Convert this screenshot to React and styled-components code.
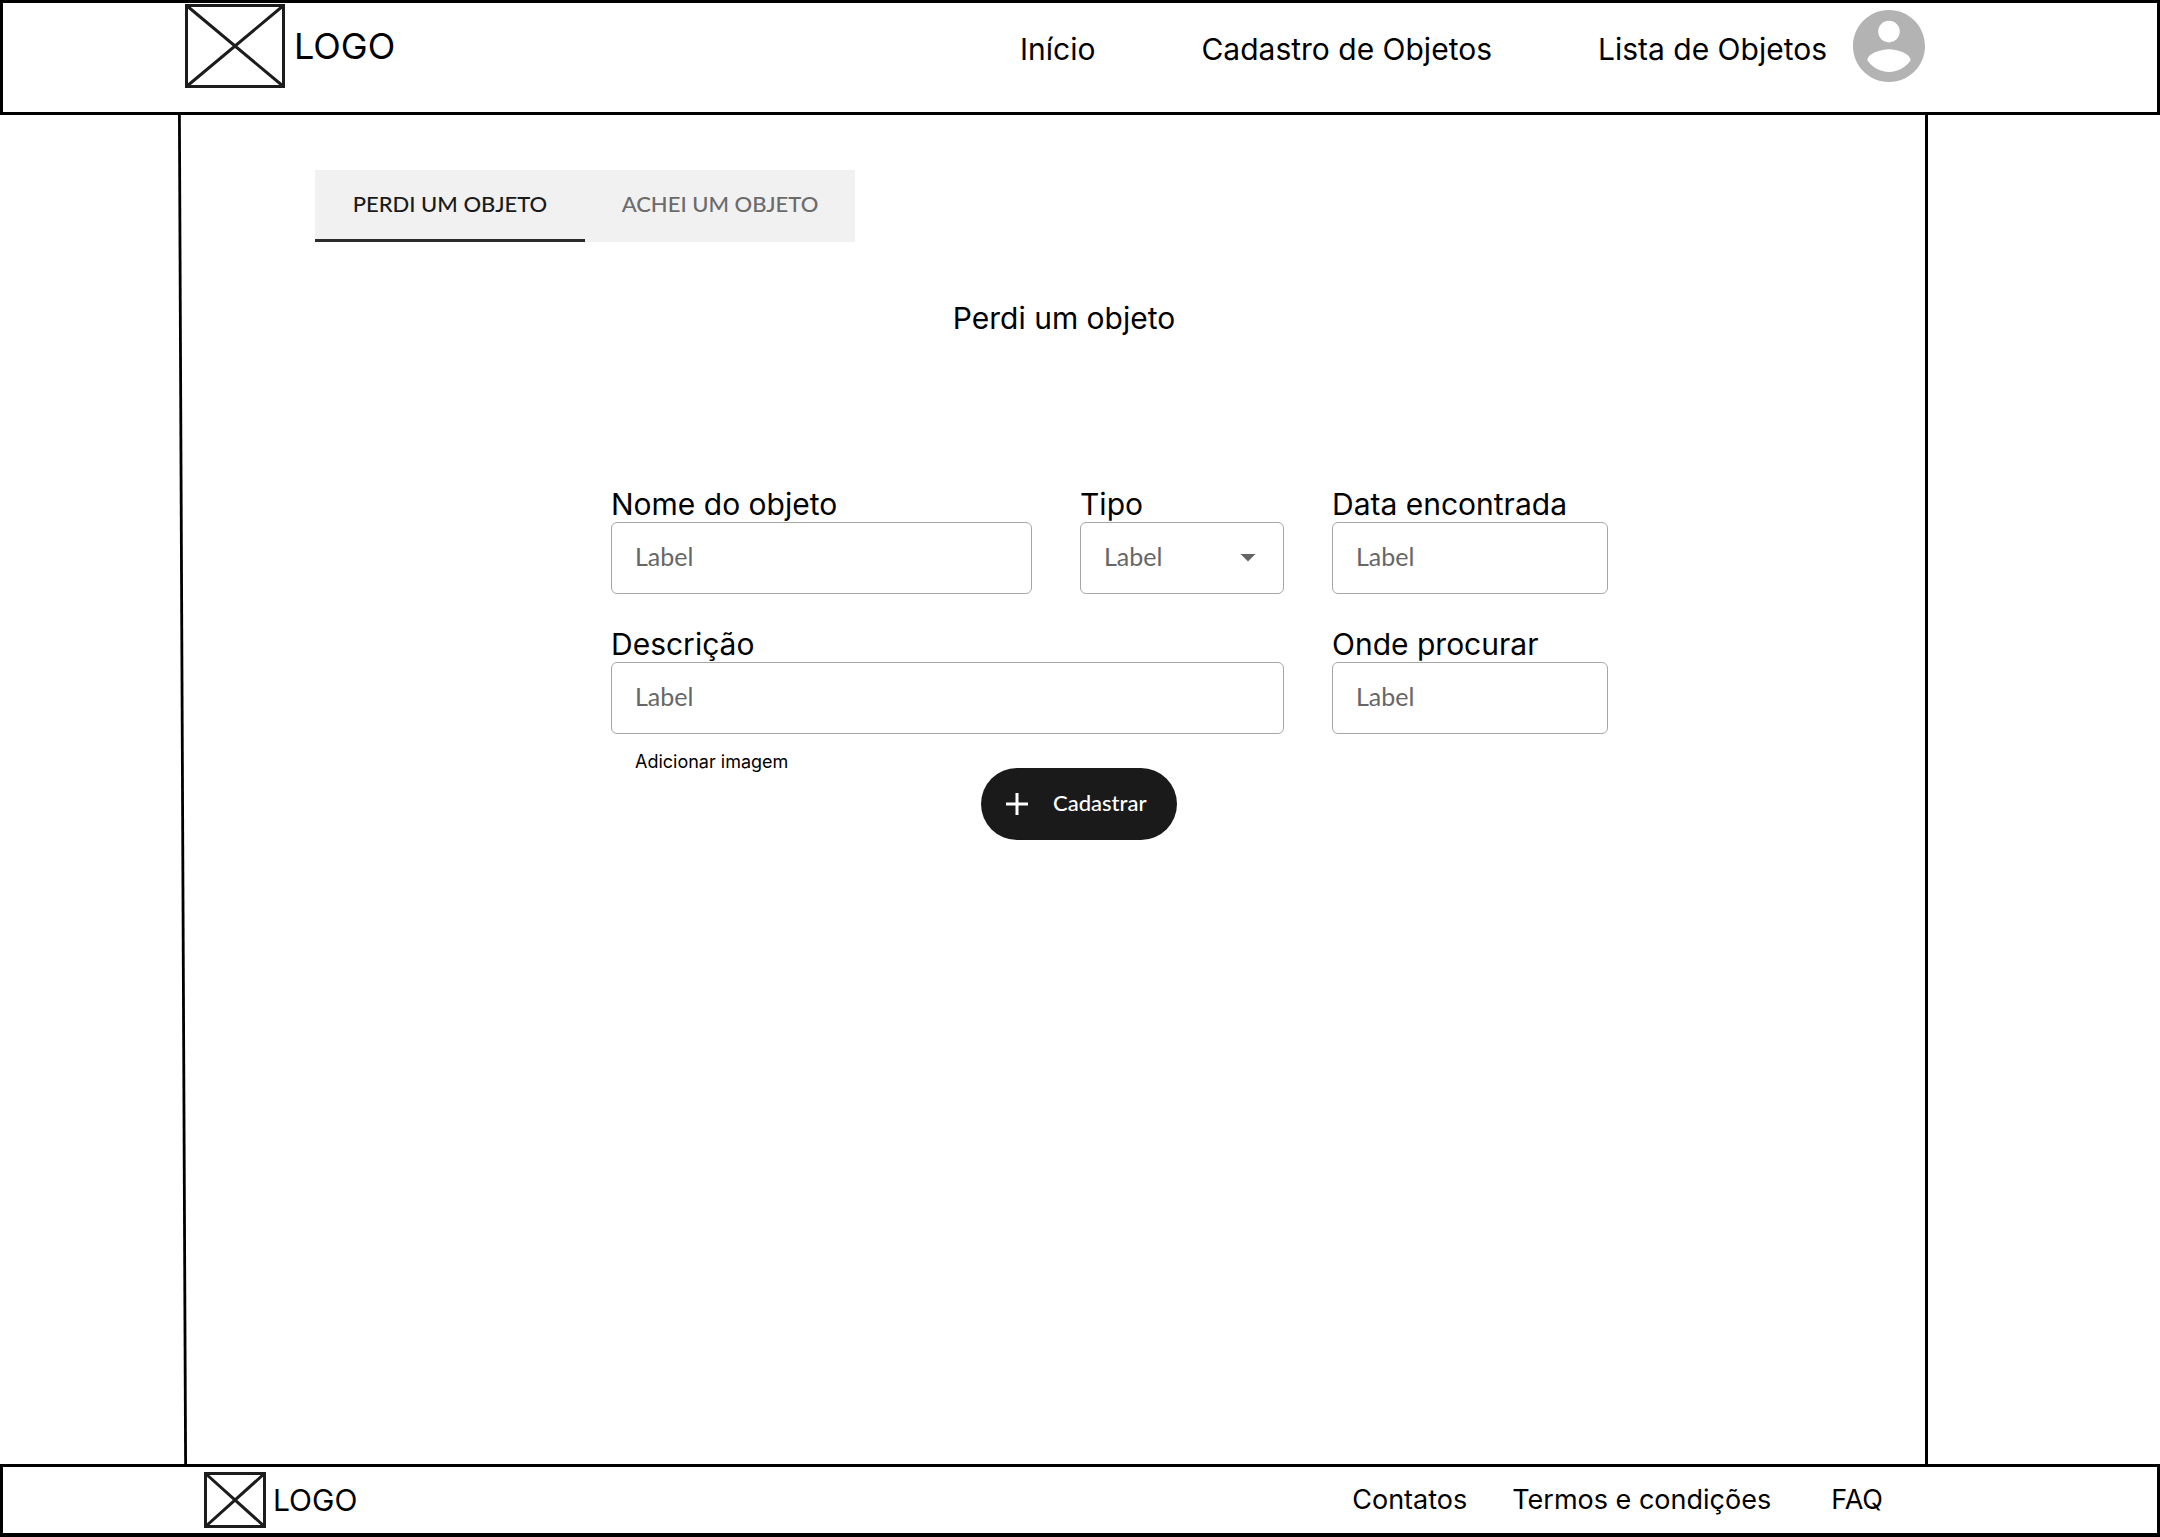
import React, { useState } from "react";
import styled, { createGlobalStyle } from "styled-components";

const GlobalStyle = createGlobalStyle`
  *, *::before, *::after { box-sizing: border-box; }
  body {
    margin: 0;
    background: #fff;
    color: #000;
    font-family: Inter, "Liberation Sans", sans-serif;
  }
`;

const hand = `Lato, "Open Sans", sans-serif`;

const Page = styled.div`
  min-height: 100vh;
  display: flex;
  flex-direction: column;
`;

const Header = styled.header`
  display: grid;
  grid-template-columns: 175fr 1750fr 229fr;
  border: 3px solid #000;
  padding: 1px 0 24px;
`;

const Footer = styled.footer`
  display: grid;
  grid-template-columns: 175fr 1750fr 229fr;
  border: 3px solid #000;
  border-bottom-width: 4px;
  padding: 5px 0;
`;

const BarContent = styled.div`
  grid-column: 2;
  display: flex;
  align-items: center;
  justify-content: space-between;
  padding: 0 ${(p) => p.$right}px 0 ${(p) => p.$left}px;
`;

const Brand = styled.a`
  display: flex;
  align-items: center;
  gap: ${(p) => p.$gap}px;
  color: inherit;
  text-decoration: none;
  font-size: ${(p) => p.$size}px;
`;

const LogoBox = styled.svg`
  display: block;
  width: ${(p) => p.$w}px;
  height: ${(p) => p.$h}px;
`;

const HeaderRight = styled.div`
  display: flex;
  align-items: center;
  gap: 26px;
`;

const Nav = styled.nav`
  display: flex;
  gap: ${(p) => p.$gap}px;
  padding-top: ${(p) => p.$top || 0}px;
`;

const NavGroup = styled.div`
  display: flex;
  gap: 45px;
`;

const NavLink = styled.a`
  color: inherit;
  text-decoration: none;
  white-space: nowrap;
  font-size: ${(p) => p.$size}px;
  line-height: 36px;
`;

const AvatarButton = styled.button`
  display: block;
  width: 72px;
  height: 72px;
  padding: 0;
  border: 0;
  border-radius: 50%;
  background: none;

  svg { display: block; width: 100%; height: 100%; }
`;

const Body = styled.main`
  flex: 1;
  display: grid;
  grid-template-columns: 178fr 1750fr 232fr;
`;

const Panel = styled.div`
  grid-column: 2;
  display: grid;
  grid-template-columns: 9px 1fr;
  border-right: 3px solid #000;
`;

const SlantedRule = styled.svg`
  display: block;
  width: 100%;
  height: 100%;
  min-height: 0;
  contain: size;
`;

const Content = styled.div`
  padding-top: 55px;
`;

const Tabs = styled.div`
  display: inline-flex;
  margin-left: 128px;
  background: #f1f1f1;
  vertical-align: top;
`;

const Tab = styled.button`
  width: 270px;
  height: 72px;
  padding: 0 0 2px;
  border: 0;
  border-bottom: 3px solid ${(p) => (p.$active ? "#2a2c2a" : "transparent")};
  background: none;
  color: ${(p) => (p.$active ? "#1a1a1a" : "#6b6b6b")};
  font-family: ${hand};
  font-size: 22px;
  font-weight: 500;
  text-transform: uppercase;
`;

const Title = styled.h1`
  margin: 58px 0 0;
  padding-left: 16px;
  font-size: 30px;
  font-weight: 400;
  line-height: 36px;
  text-align: center;
`;

const FormArea = styled.div`
  display: grid;
  grid-template-columns: 424fr 997fr 317fr;
  margin-top: 150px;
`;

const Form = styled.form`
  grid-column: 2;
`;

const Fields = styled.div`
  display: grid;
  grid-template-columns: 421fr 204fr 276fr;
  gap: 32px 48px;
`;

const Field = styled.div`
  grid-column: span ${(p) => p.$span || 1};
  min-width: 0;
`;

const FieldLabel = styled.label`
  display: block;
  font-size: 30px;
  line-height: 36px;
  white-space: nowrap;
`;

const controlStyle = `
  display: block;
  width: 100%;
  height: 72px;
  padding: 0 24px 4px 23px;
  border: 1px solid #a6a6a6;
  border-radius: 6px;
  outline-offset: 2px;
  background: #fff;
  color: #666;
  font-family: ${hand};
  font-size: 25px;
`;

const TextInput = styled.input`
  ${controlStyle}
  &::placeholder { color: #666; opacity: 1; }
`;

const SelectWrap = styled.div`
  position: relative;

  svg {
    position: absolute;
    top: 32px;
    right: 28px;
    pointer-events: none;
  }
`;

const Select = styled.select`
  ${controlStyle}
  appearance: none;
`;

const Actions = styled.div`
  display: grid;
  grid-template-columns: 370fr 627fr;
  align-items: start;
  justify-items: start;
`;

const FileLabel = styled.label`
  padding: 16px 0 0 24px;
  font-size: 18px;
  line-height: 24px;
`;

const FileInput = styled.input`
  display: none;
`;

const SubmitButton = styled.button`
  display: flex;
  align-items: center;
  gap: 24px;
  height: 72px;
  margin-top: 34px;
  padding: 0 31px 0 24px;
  border: 0;
  border-radius: 36px;
  background: #1a1a1a;
  color: #fff;
  font-family: ${hand};
  font-size: 22px;
  font-weight: 500;
`;

const SubmitText = styled.span`
  padding-bottom: 3px;
`;

function Logo({ w, h }) {
  return (
    <LogoBox $w={w} $h={h} viewBox={`0 0 ${w} ${h}`} fill="none" stroke="#1c1c1c" strokeWidth="3" aria-hidden="true">
      <rect x="1.5" y="1.5" width={w - 3} height={h - 3} />
      <path d={`M1.5 1.5L${w - 1.5} ${h - 1.5}M${w - 1.5} 1.5L1.5 ${h - 1.5}`} />
    </LogoBox>
  );
}

function InputField({ id, label, span }) {
  return (
    <Field $span={span}>
      <FieldLabel htmlFor={id}>{label}</FieldLabel>
      <TextInput id={id} name={id} type="text" placeholder="Label" />
    </Field>
  );
}

export default function App() {
  const [tab, setTab] = useState("Perdi um objeto");

  return (
    <Page>
      <GlobalStyle />
      <Header>
        <BarContent $left={7} $right={3}>
          <Brand href="#" $size={36} $gap={9}>
            <Logo w={100} h={84} />
            LOGO
          </Brand>
          <HeaderRight>
            <Nav $gap={106} $top={6}>
              <NavLink href="#" $size={30}>Início</NavLink>
              <NavLink href="#" $size={30}>Cadastro de Objetos</NavLink>
              <NavLink href="#" $size={30}>Lista de Objetos</NavLink>
            </Nav>
            <AvatarButton type="button" aria-label="Conta">
              <svg viewBox="2 2 20 20" fill="#b3b3b3">
                <path d="M12 2C6.48 2 2 6.48 2 12s4.48 10 10 10 10-4.480 10-10S17.520 2 12 2zm0 3c1.660 0 3 1.340 3 3s-1.340 3-3 3-3-1.340-3-3 1.340-3 3-3zm0 14.200c-2.500 0-4.710-1.280-6-3.220.03-1.990 4-3.080 6-3.080 1.990 0 5.970 1.090 6 3.080-1.290 1.940-3.500 3.220-6 3.220z" />
              </svg>
            </AvatarButton>
          </HeaderRight>
        </BarContent>
      </Header>

      <Body>
        <Panel>
          <SlantedRule viewBox="0 0 9 100" preserveAspectRatio="none" aria-hidden="true">
            <path d="M0 0H2.800L9 100H6.200Z" fill="#000" />
          </SlantedRule>
          <Content>
            <Tabs role="tablist">
              {["Perdi um objeto", "Achei um objeto"].map((name) => (
                <Tab
                  key={name}
                  type="button"
                  role="tab"
                  aria-selected={tab === name}
                  $active={tab === name}
                  onClick={() => setTab(name)}
                >
                  {name}
                </Tab>
              ))}
            </Tabs>
            <Title>{tab}</Title>
            <FormArea>
              <Form onSubmit={(e) => e.preventDefault()}>
                <Fields>
                  <InputField id="nome" label="Nome do objeto" />
                  <Field>
                    <FieldLabel htmlFor="tipo">Tipo</FieldLabel>
                    <SelectWrap>
                      <Select id="tipo" name="tipo" defaultValue="">
                        <option value="">Label</option>
                      </Select>
                      <svg width="16" height="8" viewBox="0 0 16 8" fill="#666" aria-hidden="true">
                        <path d="M0.500 0H15.500L8 7.500Z" />
                      </svg>
                    </SelectWrap>
                  </Field>
                  <InputField id="data" label="Data encontrada" />
                  <InputField id="descricao" label="Descrição" span={2} />
                  <InputField id="onde" label="Onde procurar" />
                </Fields>
                <Actions>
                  <FileLabel>
                    Adicionar imagem
                    <FileInput type="file" accept="image/*" />
                  </FileLabel>
                  <SubmitButton type="submit">
                    <svg width="24" height="24" viewBox="0 0 24 24" stroke="#fff" strokeWidth="3" aria-hidden="true">
                      <path d="M1 12H23M12 1V23" />
                    </svg>
                    <SubmitText>Cadastrar</SubmitText>
                  </SubmitButton>
                </Actions>
              </Form>
            </FormArea>
          </Content>
        </Panel>
      </Body>

      <Footer>
        <BarContent $left={26} $right={45}>
          <Brand href="#" $size={30} $gap={7}>
            <Logo w={62} h={56} />
            LOGO
          </Brand>
          <Nav $gap={60}>
            <NavGroup>
              <NavLink href="#" $size={27}>Contatos</NavLink>
              <NavLink href="#" $size={27}>Termos e condições</NavLink>
            </NavGroup>
            <NavLink href="#" $size={27}>FAQ</NavLink>
          </Nav>
        </BarContent>
      </Footer>
    </Page>
  );
}
